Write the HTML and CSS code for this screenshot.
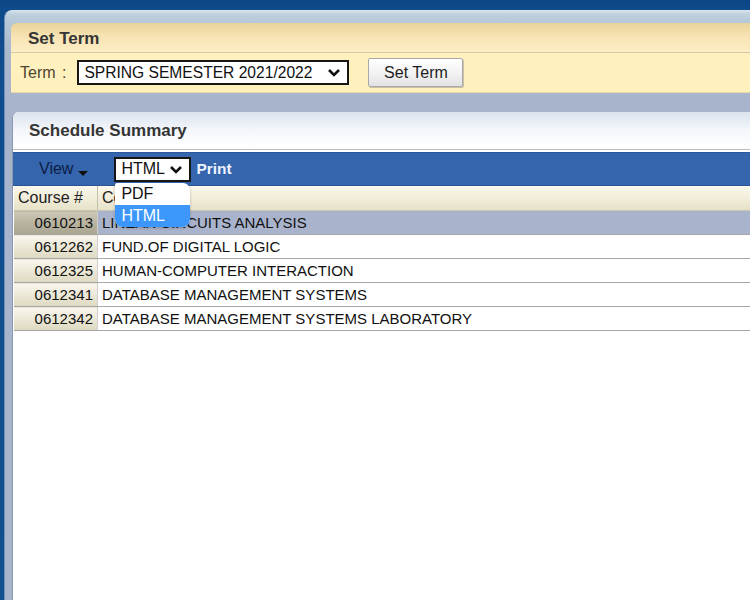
FILE: index.html
```html
<!DOCTYPE html>
<html>
<head>
<meta charset="utf-8">
<link rel="stylesheet" href="styles.css">
</head>
<body>
<div class="frame">
  <section class="term-panel">
    <div class="term-head">Set Term</div>
    <div class="term-body">
      <span class="term-label">Term :</span>
      <div class="fake-select term-select">
        <span>SPRING SEMESTER 2021/2022</span>
        <svg class="chev" width="14" height="9" viewBox="0 0 14 9"><path d="M2 2 L7 7 L12 2" fill="none" stroke="#111" stroke-width="2.6"/></svg>
      </div>
      <button class="btn">Set Term</button>
    </div>
  </section>

  <section class="summary">
    <div class="sum-head">Schedule Summary</div>
    <div class="toolbar">
      <span class="view">View</span>
      <span class="tri"></span>
      <div class="select-wrap">
        <div class="fake-select fmt-select">
          <span>HTML</span>
          <svg class="chev" width="14" height="9" viewBox="0 0 14 9"><path d="M2 2 L7 7 L12 2" fill="none" stroke="#111" stroke-width="2.6"/></svg>
        </div>
        <ul class="options">
          <li>PDF</li>
          <li class="active">HTML</li>
        </ul>
      </div>
      <span class="print">Print</span>
    </div>
    <table class="grid">
      <thead>
        <tr><th class="c-num">Course #</th><th class="c-name">Course</th></tr>
      </thead>
      <tbody>
        <tr class="sel"><td class="c-num">0610213</td><td class="c-name">LINEAR CIRCUITS ANALYSIS</td></tr>
        <tr><td class="c-num">0612262</td><td class="c-name">FUND.OF DIGITAL LOGIC</td></tr>
        <tr><td class="c-num">0612325</td><td class="c-name">HUMAN-COMPUTER INTERACTION</td></tr>
        <tr><td class="c-num">0612341</td><td class="c-name">DATABASE MANAGEMENT SYSTEMS</td></tr>
        <tr><td class="c-num">0612342</td><td class="c-name">DATABASE MANAGEMENT SYSTEMS LABORATORY</td></tr>
      </tbody>
    </table>
  </section>
</div>
</body>
</html>
```
FILE: styles.css
```css
html, body {
  margin: 0;
  padding: 0;
}
body {
  width: 750px;
  height: 600px;
  overflow: hidden;
  background: linear-gradient(#0a4584, #0f4c8d 10px, #14508f);
  font-family: "Liberation Sans", Arial, sans-serif;
  color: #111;
}
.frame {
  box-sizing: border-box;
  height: 590px;
  margin: 10px 0 0 4px;
  padding: 13px 0 0 6px;
  border-top-left-radius: 8px;
  border-left: 1px solid #6f8fb8;
  background: linear-gradient(#dbe6ee, #bfd0de 4px, #b4c7d6 13px, #aab8cd 40px, #a8b4cc 90px);
}

/* Set Term panel */
.term-panel {
  border-top-left-radius: 6px;
  overflow: hidden;
}
.term-head {
  box-sizing: border-box;
  height: 30px;
  padding: 3px 0 0 17px;
  display: flex;
  align-items: center;
  font-weight: bold;
  font-size: 17px;
  color: #353535;
  background: linear-gradient(#e9d29a, #f7e3b2 45%, #fdeec6);
  border-bottom: 1px solid #d4c8a6;
}
.term-body {
  box-sizing: border-box;
  height: 40px;
  display: flex;
  align-items: center;
  padding-left: 9px;
  background: #fff1bd;
  border-bottom: 1px solid #e7d8a6;
}
.term-label {
  font-size: 16px;
  color: #4e4430;
  word-spacing: 2px;
}
.fake-select {
  box-sizing: border-box;
  display: flex;
  align-items: center;
  justify-content: space-between;
  background: #fff;
  border: 2px solid #161616;
  color: #111;
}
.term-select {
  width: 272px;
  height: 25px;
  margin-left: 11px;
  padding: 0 6px 0 5px;
  font-size: 15.6px;
}
.chev {
  display: block;
}
.btn {
  box-sizing: border-box;
  width: 95px;
  height: 29px;
  margin-left: 19px;
  border: 1px solid #a9a9a9;
  border-radius: 2px;
  background: linear-gradient(#ffffff, #f3f3f3 50%, #e2e2e2);
  box-shadow: 1px 1px 0 #c9c2a4;
  font-family: "Liberation Sans", Arial, sans-serif;
  font-size: 16px;
  color: #1d1d1d;
  padding: 0;
}

/* Schedule summary */
.summary {
  margin: 19px 0 0 1px;
  height: 500px;
  background: #fff;
  border-left: 1px solid #8a98b2;
  border-top-left-radius: 6px;
}
.sum-head {
  box-sizing: border-box;
  height: 38px;
  padding: 1px 0 0 16px;
  display: flex;
  align-items: center;
  font-weight: bold;
  font-size: 17px;
  color: #353535;
  background: linear-gradient(#dbe3ee, #f4f7fb 50%, #fff);
  border-bottom: 1px solid #bdbdbd;
  border-top-left-radius: 6px;
}
.toolbar {
  box-sizing: border-box;
  height: 34px;
  margin-top: 2px;
  display: flex;
  align-items: center;
  padding-left: 26px;
  background: #3465ad;
  border-top: 1px solid #2a579d;
  border-bottom: 1px solid #2a5396;
}
.view {
  font-size: 16px;
  color: #0d1c45;
}
.tri {
  width: 0;
  height: 0;
  margin: 9px 0 0 5px;
  border-left: 5px solid transparent;
  border-right: 5px solid transparent;
  border-top: 5px solid #101010;
}
.select-wrap {
  position: relative;
  margin-left: 26px;
}
.fmt-select {
  width: 77px;
  height: 25px;
  padding: 0 6px 0 5px;
  font-size: 16px;
}
.options {
  position: absolute;
  top: 26px;
  left: 1px;
  width: 75px;
  margin: 0;
  padding: 0;
  list-style: none;
  background: #fff;
  border-radius: 2px 7px 8px 8px;
  overflow: hidden;
  box-shadow: 0 1px 3px rgba(0, 0, 0, 0.25);
  z-index: 5;
  font-size: 16px;
}
.options li {
  height: 22px;
  line-height: 21px;
  padding-left: 6px;
  color: #111;
}
.options li.active {
  height: 22px;
  background: #3d97fb;
  color: #fff;
}
.print {
  margin-left: 5px;
  font-size: 15.5px;
  font-weight: bold;
  color: #eef3ff;
}

/* Table */
.grid {
  margin-left: 1px;
  width: 737px;
  border-collapse: collapse;
  font-size: 15px;
}
.grid th {
  height: 24px;
  padding: 0 0 0 4px;
  text-align: left;
  font-weight: normal;
  font-size: 16px;
  color: #222;
  background: linear-gradient(#fbf8ec, #efebd6 60%, #e6e1c8);
  border-bottom: 1px solid #cbc6ae;
}
.grid th.c-num {
  width: 79px;
  border-right: 1px solid #c4bfa7;
}
.grid td {
  box-sizing: border-box;
  height: 24px;
  padding: 0;
  border-bottom: 1px solid #a6a6a6;
  white-space: nowrap;
}
.grid td.c-num {
  text-align: right;
  padding-right: 4px;
  background: linear-gradient(#f9f7ee, #ece8d6 50%, #ddd8c0);
  border-right: 1px solid #d0d0d0;
}
.grid td.c-name {
  padding-left: 4px;
  background: #fff;
}
.grid tr.sel td.c-num {
  background: linear-gradient(#cdc9b6, #b8b4a0 50%, #a9a591);
}
.grid tr.sel td.c-name {
  background: #a9b4cc;
}
```
